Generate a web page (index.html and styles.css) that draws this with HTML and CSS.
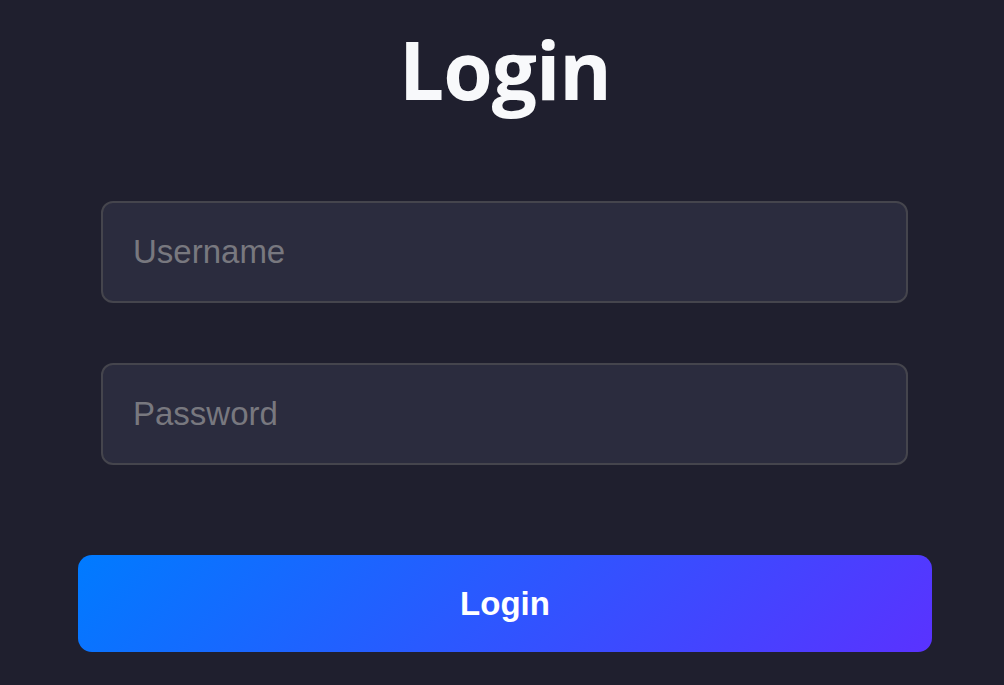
FILE: index.html
```html
<!DOCTYPE html>
<html lang="en">
<head>
<meta charset="utf-8">
<title>Login</title>
<link rel="stylesheet" href="styles.css">
</head>
<body>
<main class="login">
  <h1 class="login-title">Login</h1>
  <form class="login-form">
    <div class="fields">
      <input class="field" type="text" placeholder="Username">
      <input class="field" type="password" placeholder="Password">
    </div>
    <button class="login-btn" type="button">Login</button>
  </form>
</main>
</body>
</html>
```

FILE: styles.css
```css
html, body {
  margin: 0;
  padding: 0;
  background: #1f1f2e;
  height: 100%;
}
body {
  font-family: "Liberation Sans", Arial, sans-serif;
  overflow: hidden;
}
.login {
  width: 854px;
  margin-left: 78px;
  padding-top: 21px;
  display: flex;
  flex-direction: column;
}
.login-title {
  margin: 0;
  font-family: "Open Sans", "Noto Sans", sans-serif;
  font-weight: 700;
  font-size: 80px;
  line-height: 96px;
  color: #f8f9fb;
  text-align: center;
  letter-spacing: -1px;
}
.login-form {
  margin-top: 84px;
  display: flex;
  flex-direction: column;
  gap: 90px;
}
.fields {
  display: flex;
  flex-direction: column;
  gap: 60px;
  padding: 0 24px 0 23px;
}
.field {
  box-sizing: border-box;
  height: 102px;
  width: 100%;
  margin: 0;
  padding: 0 30px;
  border: 2px solid #45454d;
  border-radius: 12px;
  background: #2b2c3e;
  color: #e5e5ea;
  font-family: "Liberation Sans", Arial, sans-serif;
  font-size: 33px;
  outline: none;
}
.field::placeholder {
  color: #78787f;
}
.login-btn {
  height: 97px;
  width: 100%;
  border: 0;
  border-radius: 14px;
  background: linear-gradient(135deg, #007bff 0%, #5a32ff 100%);
  color: #ffffff;
  font-family: "Liberation Sans", Arial, sans-serif;
  font-weight: 700;
  font-size: 33px;
  cursor: pointer;
}
```
